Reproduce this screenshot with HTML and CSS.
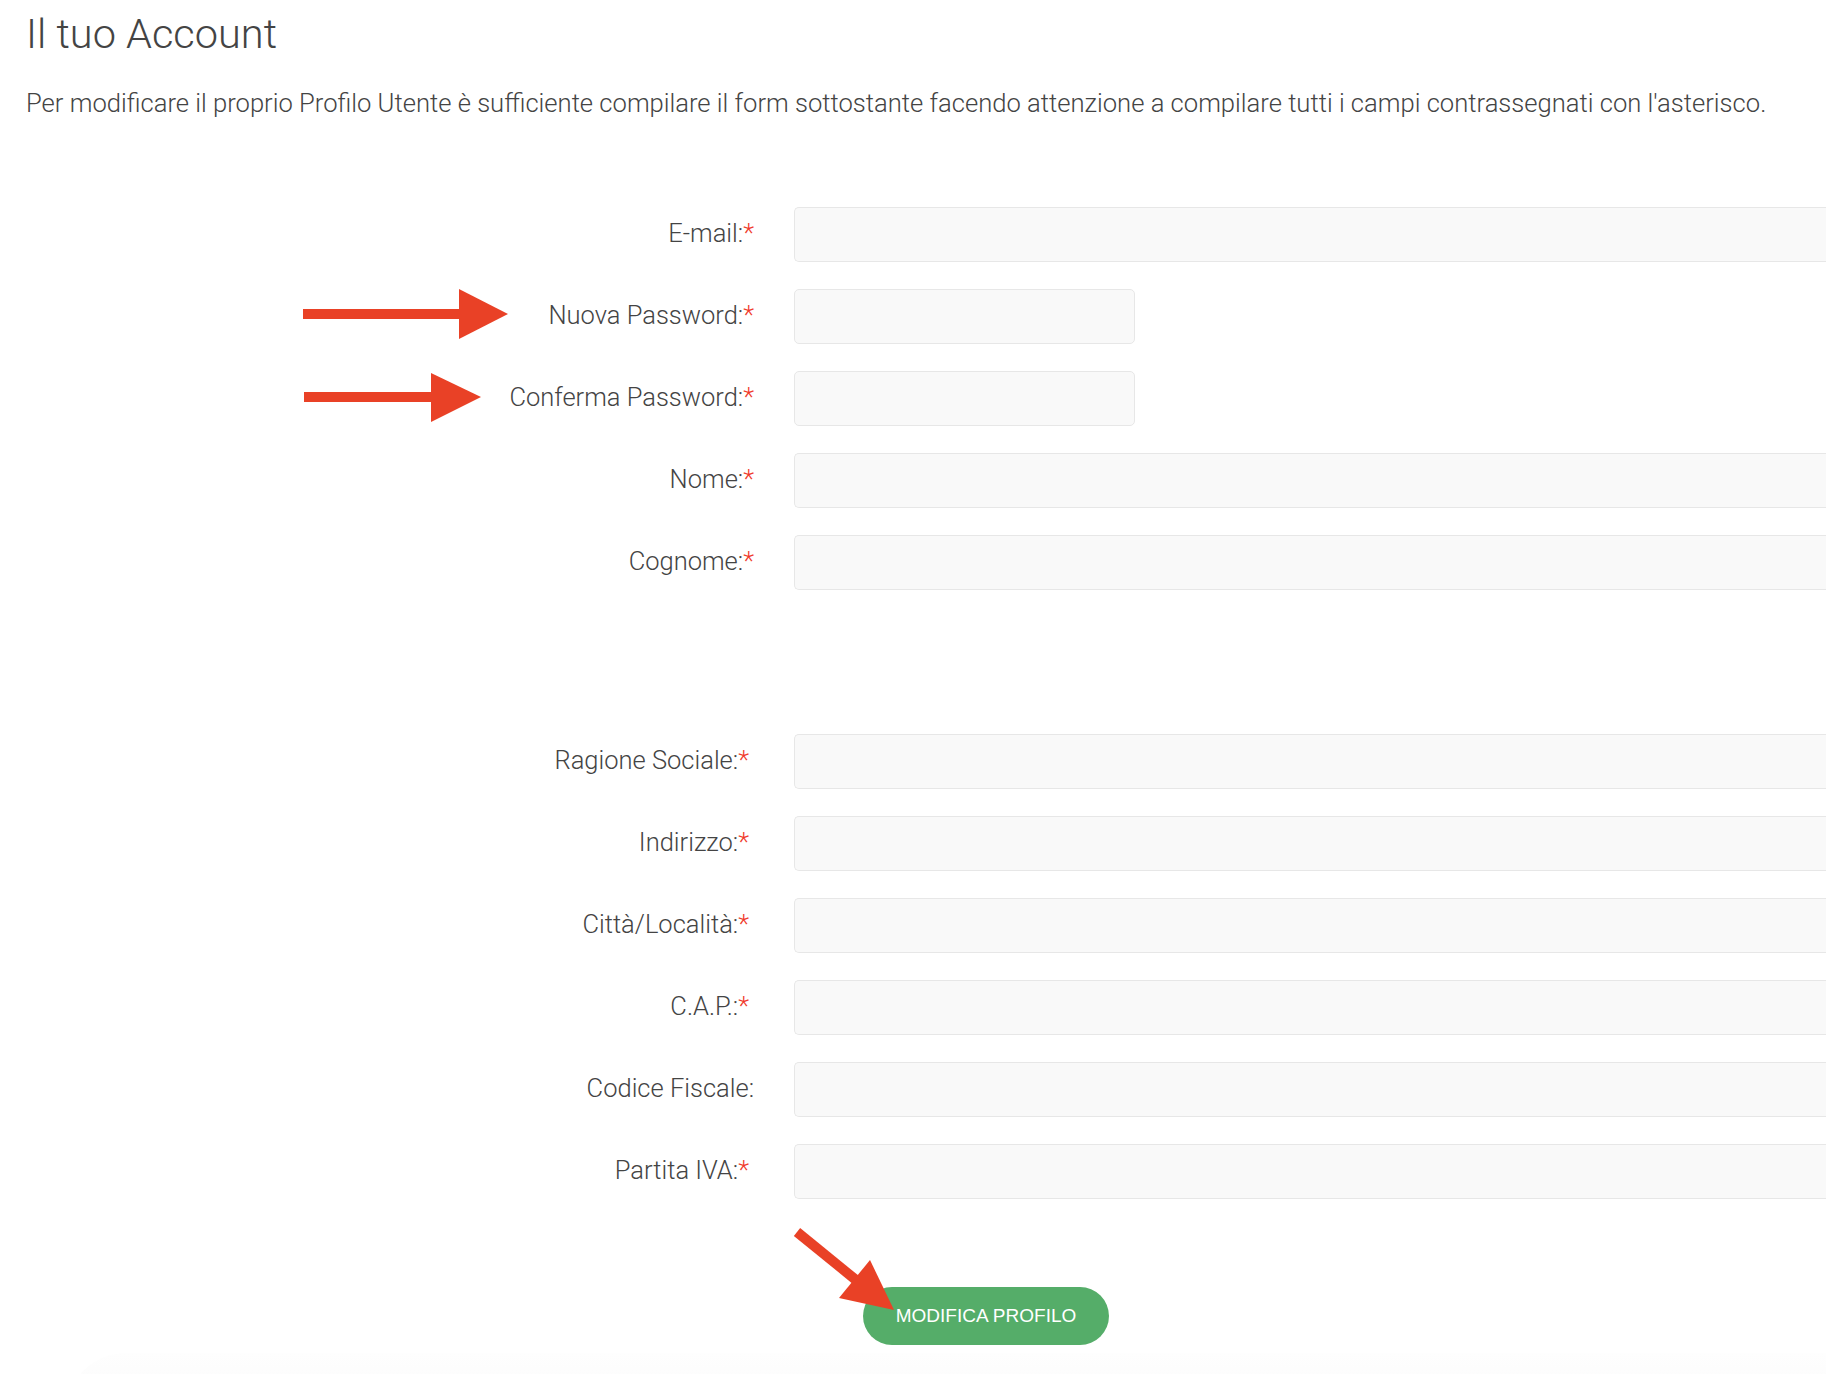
FILE: index.html
```html
<!DOCTYPE html>
<html lang="it">
<head>
<meta charset="utf-8">
<title>Il tuo Account</title>
<link rel="stylesheet" href="styles.css">
</head>
<body>
<div class="page">
  <h1 class="title">Il tuo Account</h1>
  <p class="intro">Per modificare il proprio Profilo Utente è sufficiente compilare il form sottostante facendo attenzione a compilare tutti i campi contrassegnati con l'asterisco.</p>

  <form class="form">
    <div class="row">
      <label class="label">E-mail:<span class="req">*</span></label>
      <input class="field" type="text">
    </div>
    <div class="row">
      <label class="label">Nuova Password:<span class="req">*</span></label>
      <input class="field field-short" type="password">
    </div>
    <div class="row">
      <label class="label">Conferma Password:<span class="req">*</span></label>
      <input class="field field-short" type="password">
    </div>
    <div class="row">
      <label class="label">Nome:<span class="req">*</span></label>
      <input class="field" type="text">
    </div>
    <div class="row">
      <label class="label">Cognome:<span class="req">*</span></label>
      <input class="field" type="text">
    </div>

    <div class="spacer"></div>

    <div class="row">
      <label class="label label-b">Ragione Sociale:<span class="req">*</span></label>
      <input class="field" type="text">
    </div>
    <div class="row">
      <label class="label label-b">Indirizzo:<span class="req">*</span></label>
      <input class="field" type="text">
    </div>
    <div class="row">
      <label class="label label-b">Città/Località:<span class="req">*</span></label>
      <input class="field" type="text">
    </div>
    <div class="row">
      <label class="label label-b">C.A.P.:<span class="req">*</span></label>
      <input class="field" type="text">
    </div>
    <div class="row">
      <label class="label">Codice Fiscale:</label>
      <input class="field" type="text">
    </div>
    <div class="row">
      <label class="label label-b">Partita IVA:<span class="req">*</span></label>
      <input class="field" type="text">
    </div>

    <div class="actions">
      <button class="btn" type="button">MODIFICA PROFILO</button>
    </div>
  </form>
  <div class="footer-shade"></div>

  <svg class="annotations" width="1826" height="1374" viewBox="0 0 1826 1374" aria-hidden="true">
    <rect x="303" y="309" width="158" height="10" fill="#e94126"/>
    <polygon points="459,289 508,314 459,339" fill="#e94126"/>
    <rect x="304" y="392" width="129" height="10" fill="#e94126"/>
    <polygon points="431,373 481,397 431,422" fill="#e94126"/>
    <line x1="797" y1="1232" x2="856" y2="1280" stroke="#e94126" stroke-width="10"/>
    <polygon points="839,1298 870,1260 894,1310" fill="#e94126"/>
  </svg>
</div>
</body>
</html>
```

FILE: styles.css
```css
html, body {
  margin: 0;
  padding: 0;
  background: #ffffff;
  overflow: hidden;
}

body {
  font-family: Roboto, "Liberation Sans", Arial, sans-serif;
  color: #454545;
}

.page {
  position: relative;
  width: 1826px;
  height: 1374px;
  padding: 9px 0 0 26px;
  box-sizing: border-box;
  overflow: hidden;
}

.title {
  margin: 0;
  font-size: 41.5px;
  line-height: 50px;
  font-weight: 300;
  color: #444;
}

.intro {
  margin: 26px 0 0 0;
  font-size: 25.6px;
  line-height: 36px;
  font-weight: 300;
  color: #444;
  white-space: nowrap;
}

.form {
  margin-top: 86px;
}

.row {
  display: flex;
  align-items: center;
  gap: 40px;
  margin-bottom: 27px;
}

.label {
  flex: 0 0 728px;
  text-align: right;
  font-size: 25.5px;
  font-weight: 300;
  color: #444;
  box-sizing: border-box;
  padding-bottom: 4px;
}

.label-b {
  padding-right: 5px;
}

.req {
  color: #f0392b;
}

.field {
  flex: 1 1 auto;
  min-width: 0;
  height: 55px;
  box-sizing: border-box;
  background: #f9f9f9;
  border: 1px solid #e7e7e7;
  border-right: none;
  border-radius: 5px 0 0 5px;
  margin: 0;
  padding: 0 12px;
}

.field-short {
  flex: 0 0 341px;
  width: 341px;
  border-right: 1px solid #e7e7e7;
  border-radius: 5px;
}

.spacer {
  height: 117px;
}

.actions {
  padding-left: 837px;
  padding-top: 61px;
}

.btn {
  width: 246px;
  height: 58px;
  border: none;
  border-radius: 29px;
  background: #55ad69;
  color: #ffffff;
  font-family: "Liberation Sans", Arial, sans-serif;
  font-size: 19px;
  padding: 0;
  cursor: pointer;
}

.footer-shade {
  margin: 8px 0 0 40px;
  height: 60px;
  border-radius: 80px 0 0 0;
  background: linear-gradient(#fefefe, #fafafa);
}

.annotations {
  position: absolute;
  top: 0;
  left: 0;
  pointer-events: none;
}
```
